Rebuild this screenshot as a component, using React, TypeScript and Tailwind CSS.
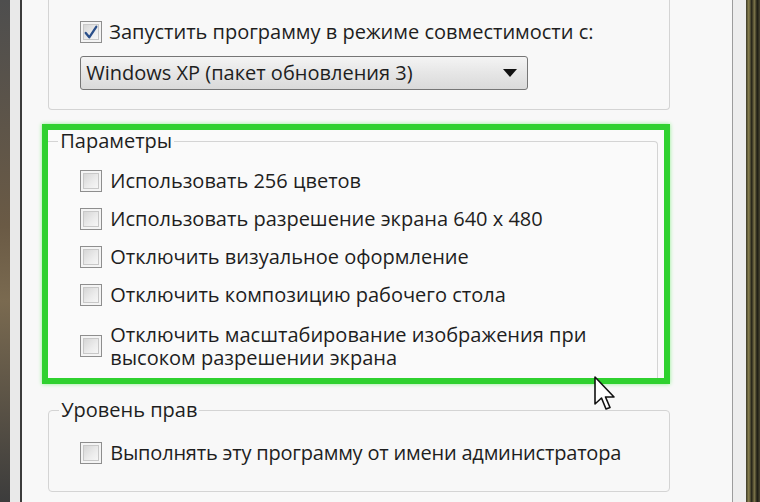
import React from 'react';

const font = { fontFamily: '"Open Sans", "Noto Sans", sans-serif' };

const Box = ({ checked = false }: { checked?: boolean }) => (
  <div className="w-[22px] h-[22px] shrink-0 border border-[#8e8e8e] bg-[#f4f4f4] p-[2px]">
    <div className="w-full h-full border border-[#c8c8c8] bg-[linear-gradient(135deg,#d6d6d6,#ececec_60%,#f6f6f6)] flex items-center justify-center">
      {checked && (
        <svg width="16" height="15" viewBox="0 0 16 15">
          <path d="M2 8 L6 13 L14 1" fill="none" stroke="#2a4f8a" strokeWidth="2.6" strokeLinecap="round" strokeLinejoin="round" />
        </svg>
      )}
    </div>
  </div>
);

const Row = ({ children }: { children: React.ReactNode }) => (
  <div className="flex items-center gap-2 h-[38px]">
    <Box />
    <span className="leading-[22px]">{children}</span>
  </div>
);

const App = () => {
  return (
    <div className="w-[760px] h-[502px] flex overflow-hidden relative text-[20px] text-[#1e1e1e]" style={font}>
      {/* left window frame */}
      <div className="w-[11px] h-full bg-[linear-gradient(180deg,#4e4e4e,#6a5a45_45%,#7a6a50_60%,#3c3c3c)]" />
      <div className="w-[11px] h-full bg-[#e9e9e9]" />
      <div className="w-[2px] h-full bg-[#3c3c3c]" />

      {/* dialog body */}
      <div className="flex-1 h-full bg-[#f8f8f8] pl-[26px] pr-[62px]">
        {/* compatibility mode */}
        <div className="h-[110px] border border-t-0 border-[#d4d4d4] rounded-b-[4px] pl-[31px] pt-[21px]">
          <div className="flex items-center gap-[7px] h-[22px]">
            <Box checked />
            <span>Запустить программу в режиме совместимости с:</span>
          </div>
          <div className="mt-[13px] w-[448px] h-[34px] border border-[#767676] rounded-[3px] bg-[linear-gradient(180deg,#f4f4f4,#e6e6e6_50%,#dadada)] flex items-center justify-between pl-[5px] pr-[10px]">
            <span>Windows XP (пакет обновления 3)</span>
            <svg width="14" height="8" viewBox="0 0 14 8">
              <path d="M0 0 H14 L7 8 Z" fill="#111" />
            </svg>
          </div>
        </div>

        {/* highlighted parameters */}
        <div className="mt-[14px] -ml-[6px] w-[628px] h-[260px] border-[6px] border-[#2fd12f] shadow-[0_0_4px_#8ef08e] bg-[#fafafa]">
          <fieldset className="w-[610px] border-t border-r border-[#d4d4d4] rounded-tr-[4px] px-[10px]">
            <legend className="px-[2px] leading-[22px]">Параметры</legend>
            <div className="pl-[22px] pt-[10px]">
              <Row>Использовать 256 цветов</Row>
              <Row>Использовать разрешение экрана 640 x 480</Row>
              <Row>Отключить визуальное оформление</Row>
              <Row>Отключить композицию рабочего стола</Row>
              <div className="flex items-center gap-2 h-[64px]">
                <Box />
                <div className="flex flex-col leading-[23px]">
                  <span>Отключить масштабирование изображения при</span>
                  <span>высоком разрешении экрана</span>
                </div>
              </div>
            </div>
          </fieldset>
        </div>

        {/* privilege level */}
        <fieldset className="mt-[15px] h-[93px] border border-[#d4d4d4] rounded-[4px] px-[10px]">
          <legend className="px-[2px] leading-[22px]">Уровень прав</legend>
          <div className="pl-[21px] pt-[21px] flex items-center gap-2">
            <Box />
            <span className="leading-[22px] tracking-[-0.2px]">Выполнять эту программу от имени администратора</span>
          </div>
        </fieldset>
      </div>

      {/* right window frame */}
      <div className="w-px h-full bg-[#9c9c9c]" />
      <div className="w-[14px] h-full bg-[#ededed]" />
      <div className="w-[15px] h-full bg-[linear-gradient(90deg,#3a3826,#8c8350_20%,#26251a_40%,#7a7248_60%,#1c1c14_80%,#4a4630)]" />

      {/* mouse cursor */}
      <svg className="absolute left-[594px] top-[376px]" width="24" height="36" viewBox="0 0 24 36">
        <path d="M1 1 L1 28 L7.5 22 L12 33 L16 31.5 L11.5 21 L20 21 Z" fill="#fff" stroke="#111" strokeWidth="1.6" strokeLinejoin="round" />
      </svg>
    </div>
  );
};

export default App;
